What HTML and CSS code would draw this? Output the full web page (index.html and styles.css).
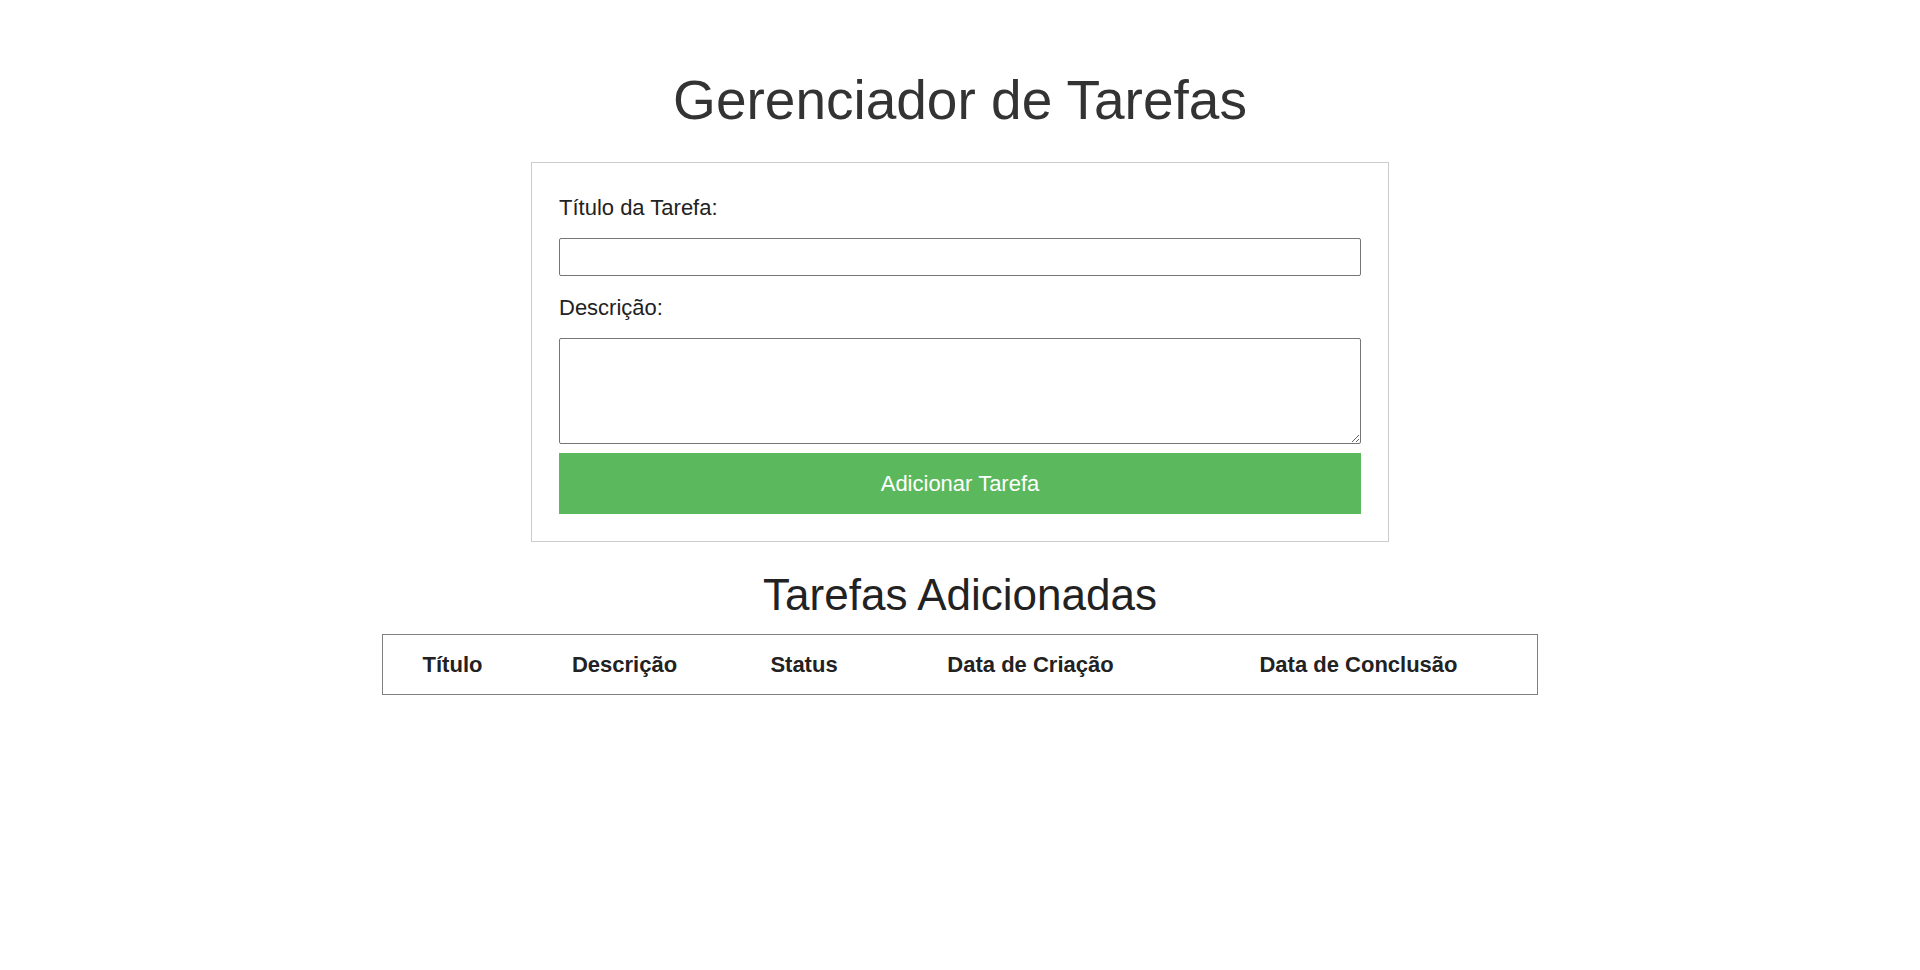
FILE: index.html
```html
<!DOCTYPE html>
<html lang="pt-BR">
<head>
<meta charset="utf-8">
<title>Gerenciador de Tarefas</title>
<link rel="stylesheet" href="styles.css">
</head>
<body>
  <h1 class="page-title">Gerenciador de Tarefas</h1>
  <form class="task-form">
    <label class="field-label first" for="titulo">Título da Tarefa:</label>
    <input class="field-input" type="text" id="titulo">
    <label class="field-label" for="descricao">Descrição:</label>
    <textarea class="field-area" id="descricao"></textarea>
    <button class="add-btn" type="button">Adicionar Tarefa</button>
  </form>
  <h2 class="list-title">Tarefas Adicionadas</h2>
  <table class="task-table">
    <thead>
      <tr>
        <th class="c1">Título</th>
        <th class="c2">Descrição</th>
        <th class="c3">Status</th>
        <th class="c4">Data de Criação</th>
        <th class="c5">Data de Conclusão</th>
      </tr>
    </thead>
    <tbody></tbody>
  </table>
</body>
</html>
```

FILE: styles.css
```css
html, body {
  margin: 0;
  padding: 0;
  background: #ffffff;
}

body {
  font-family: "Liberation Sans", Arial, sans-serif;
  color: #222222;
}

.page-title {
  margin: 69px 0 31px;
  font-size: 55px;
  line-height: 62px;
  font-weight: normal;
  color: #333333;
  text-align: center;
}

.task-form {
  box-sizing: border-box;
  width: 858px;
  margin: 0 auto;
  padding: 27px;
  border: 1px solid #cccccc;
  display: flex;
  flex-direction: column;
}

.field-label {
  display: block;
  font-size: 22px;
  line-height: 25px;
  color: #222222;
  margin-top: 19px;
}

.field-label.first {
  margin-top: 5px;
}

.field-input,
.field-area {
  box-sizing: border-box;
  width: 100%;
  margin: 18px 0 0;
  border: 1px solid #767676;
  border-radius: 2px;
  background: #ffffff;
  font-family: "Liberation Sans", Arial, sans-serif;
  font-size: 18px;
  padding: 4px 8px;
}

.field-input {
  height: 38px;
}

.field-area {
  height: 106px;
  display: block;
}

.add-btn {
  margin-top: 9px;
  height: 61px;
  width: 100%;
  border: none;
  background: #5cb85c;
  color: #ffffff;
  font-family: "Liberation Sans", Arial, sans-serif;
  font-size: 22px;
  cursor: pointer;
}

.list-title {
  margin: 28px 0 14px;
  font-size: 44px;
  line-height: 50px;
  font-weight: normal;
  color: #222222;
  text-align: center;
}

.task-table {
  width: 1156px;
  margin: 0 auto;
  border: 1px solid #808080;
  border-spacing: 2px;
  table-layout: fixed;
}

.task-table th {
  box-sizing: border-box;
  padding: 15px 8px;
  font-size: 22px;
  line-height: 25px;
  font-weight: bold;
  color: #222222;
  text-align: center;
  white-space: nowrap;
}

.c1 { width: 135px; }
.c2 { width: 205px; }
.c3 { width: 150px; }
.c4 { width: 299px; }
.c5 { width: 353px; }
```
